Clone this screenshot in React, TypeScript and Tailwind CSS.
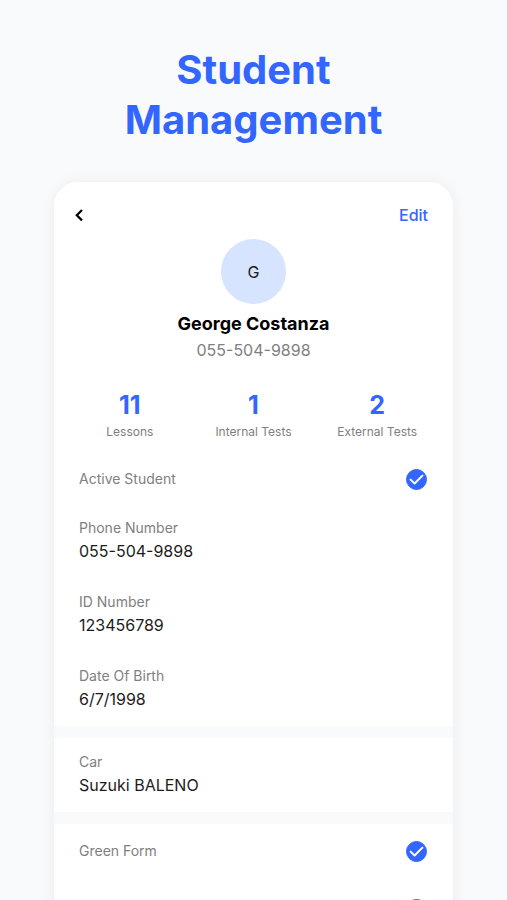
import { useState } from "react";

const stats = [
  { value: 11, label: "Lessons" },
  { value: 1, label: "Internal Tests" },
  { value: 2, label: "External Tests" },
];

function Field({ label, value }: { label: string; value: string }) {
  return (
    <div>
      <dt className="text-sm text-[#808080]">{label}</dt>
      <dd className="pt-px text-base text-[#1c1c1c]">{value}</dd>
    </div>
  );
}

function CheckRow({ label }: { label?: string }) {
  const [checked, setChecked] = useState(true);
  return (
    <label className="flex h-6 cursor-pointer items-center justify-between text-sm text-[#808080]">
      <span>{label}</span>
      <span className="grid size-[21px] place-items-center">
        <input
          type="checkbox"
          checked={checked}
          onChange={(e) => setChecked(e.target.checked)}
          className="col-start-1 row-start-1 size-[21px] appearance-none rounded-full border border-[#3366ff] checked:bg-[#3366ff]"
        />
        <svg
          viewBox="0 0 21 21"
          fill="none"
          stroke="white"
          strokeWidth="2"
          strokeLinecap="round"
          strokeLinejoin="round"
          className="pointer-events-none col-start-1 row-start-1 size-[21px]"
          aria-hidden="true"
        >
          <path d="M4.6 10.6 8.6 14.5 16.4 6.6" />
        </svg>
      </span>
    </label>
  );
}

export default function App() {
  return (
    <main className="flex h-screen flex-col overflow-hidden bg-[#f8fafc] px-[54px] pt-[45px] font-['Inter',sans-serif]">
      <h1 className="shrink-0 text-center text-[40px] leading-[50px] font-bold text-[#3366ff]">
        Student
        <br />
        Management
      </h1>

      <article className="mt-[37px] shrink-0 rounded-t-[24px] bg-white pt-[21px] pb-6 shadow-[0_0_16px_rgba(0,0,0,0.06)]">
        <header className="flex h-6 items-center justify-between px-[25px]">
          <button type="button" aria-label="Back" className="flex h-6 w-3 items-center">
            <svg
              viewBox="0 0 12 24"
              fill="none"
              stroke="black"
              strokeWidth="2.2"
              className="-ml-1 h-6 w-3"
              aria-hidden="true"
            >
              <path d="M7 7 1.8 12.2 7 17.4" />
            </svg>
          </button>
          <button type="button" className="text-base font-medium text-[#3366ff]">
            Edit
          </button>
        </header>

        <section className="mt-3 flex flex-col items-center">
          <div className="flex size-[65px] items-center justify-center rounded-full bg-[#d6e4ff] text-base text-[#1c1c1c]">
            G
          </div>
          <h2 className="mt-2 text-lg leading-6 font-bold text-black">George Costanza</h2>
          <p className="mt-[2px] text-base text-[#808080]">055-504-9898</p>
        </section>

        <ul className="mt-[27px] grid grid-cols-3 px-[14px] text-center">
          {stats.map((stat) => (
            <li key={stat.label}>
              <p className="text-[25px] leading-8 font-bold text-[#3366ff]">{stat.value}</p>
              <p className="mt-[3px] text-xs text-[#808080]">{stat.label}</p>
            </li>
          ))}
        </ul>

        <section className="mt-[27px] pr-[26px] pl-[25px]">
          <CheckRow label="Active Student" />
          <dl className="mt-[27px] flex flex-col gap-[29px] pb-[15px]">
            <Field label="Phone Number" value="055-504-9898" />
            <Field label="ID Number" value="123456789" />
            <Field label="Date Of Birth" value="6/7/1998" />
          </dl>
        </section>

        <section className="border-t-12 border-[#f8fafb] px-[25px] pt-[14px] pb-[15px]">
          <dl>
            <Field label="Car" value="Suzuki BALENO" />
          </dl>
        </section>

        <section className="flex flex-col gap-[34px] border-t-12 border-[#f8fafb] pt-[15px] pr-[26px] pl-[25px]">
          <CheckRow label="Green Form" />
          <CheckRow />
        </section>
      </article>
    </main>
  );
}
